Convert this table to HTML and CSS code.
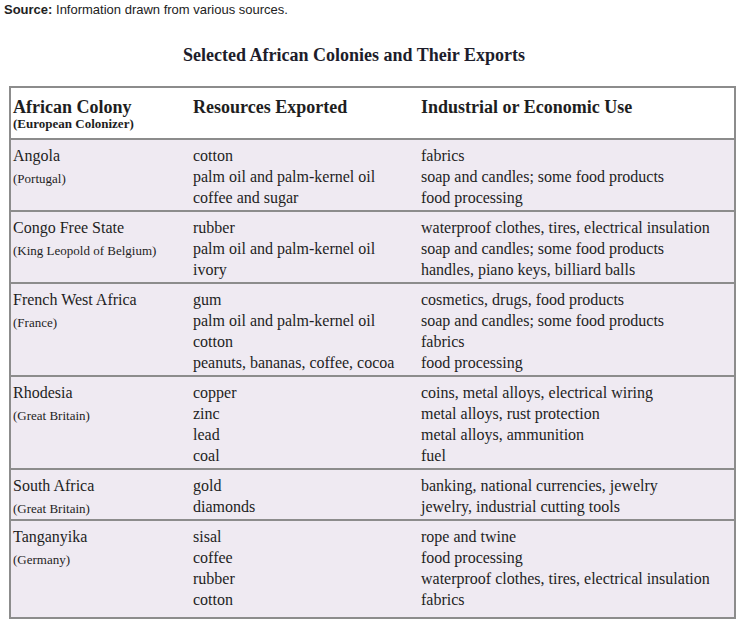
FILE: index.html
```html
<!DOCTYPE html>
<html lang="en">
<head>
<meta charset="utf-8">
<title>Selected African Colonies and Their Exports</title>
<link rel="stylesheet" href="styles.css">
</head>
<body>
<p class="source"><b>Source:</b> Information drawn from various sources.</p>
<h2 class="title">Selected African Colonies and Their Exports</h2>
<table class="exports">
  <colgroup>
    <col class="c1"><col class="c2"><col class="c3">
  </colgroup>
  <thead>
    <tr>
      <th><span class="th-main">African Colony</span><span class="th-sub">(European Colonizer)</span></th>
      <th><span class="th-main">Resources Exported</span></th>
      <th><span class="th-main">Industrial or Economic Use</span></th>
    </tr>
  </thead>
  <tbody>
    <tr>
      <td><span class="colony">Angola</span><span class="colonizer">(Portugal)</span></td>
      <td>cotton<br>palm oil and palm-kernel oil<br>coffee and sugar</td>
      <td>fabrics<br>soap and candles; some food products<br>food processing</td>
    </tr>
    <tr>
      <td><span class="colony">Congo Free State</span><span class="colonizer">(King Leopold of Belgium)</span></td>
      <td>rubber<br>palm oil and palm-kernel oil<br>ivory</td>
      <td>waterproof clothes, tires, electrical insulation<br>soap and candles; some food products<br>handles, piano keys, billiard balls</td>
    </tr>
    <tr>
      <td><span class="colony">French West Africa</span><span class="colonizer">(France)</span></td>
      <td>gum<br>palm oil and palm-kernel oil<br>cotton<br>peanuts, bananas, coffee, cocoa</td>
      <td>cosmetics, drugs, food products<br>soap and candles; some food products<br>fabrics<br>food processing</td>
    </tr>
    <tr>
      <td><span class="colony">Rhodesia</span><span class="colonizer">(Great Britain)</span></td>
      <td>copper<br>zinc<br>lead<br>coal</td>
      <td>coins, metal alloys, electrical wiring<br>metal alloys, rust protection<br>metal alloys, ammunition<br>fuel</td>
    </tr>
    <tr>
      <td><span class="colony">South Africa</span><span class="colonizer">(Great Britain)</span></td>
      <td>gold<br>diamonds</td>
      <td>banking, national currencies, jewelry<br>jewelry, industrial cutting tools</td>
    </tr>
    <tr class="last">
      <td><span class="colony">Tanganyika</span><span class="colonizer">(Germany)</span></td>
      <td>sisal<br>coffee<br>rubber<br>cotton</td>
      <td>rope and twine<br>food processing<br>waterproof clothes, tires, electrical insulation<br>fabrics</td>
    </tr>
  </tbody>
</table>
</body>
</html>
```

FILE: styles.css
```css
html, body {
  margin: 0;
  padding: 0;
  background: #ffffff;
}

body {
  padding: 0 2px 0 9px;
  color: #1e1e1e;
  font-family: "Liberation Serif", "Times New Roman", Times, serif;
}

.source {
  margin: 0 0 0 -5px;
  padding-top: 2px;
  font-family: "Liberation Sans", Arial, sans-serif;
  font-size: 13px;
  line-height: 16px;
  color: #222222;
}

.title {
  margin: 26px 0 0 0;
  padding-right: 37px;
  text-align: center;
  font-size: 18px;
  line-height: 22px;
  font-weight: bold;
  color: #1d1d2b;
}

.exports {
  margin-top: 20px;
  width: 727px;
  border-collapse: collapse;
  border: 2px solid #8c8c8c;
  table-layout: fixed;
}

.c1 { width: 180px; }
.c2 { width: 228px; }
.c3 { width: auto; }

.exports th {
  text-align: left;
  vertical-align: top;
  padding: 9px 3px 7px 3px;
  background: #ffffff;
  font-weight: bold;
}

.exports th:first-child,
.exports td:first-child {
  padding-left: 2px;
}

.th-main {
  display: block;
  font-size: 18px;
  line-height: 20px;
}

.th-sub {
  display: block;
  font-size: 13px;
  line-height: 14px;
}

.exports tbody tr {
  border-top: 2px solid #8c8c8c;
  background: #efeaf2;
}

.exports td {
  vertical-align: top;
  padding: 5px 3px 2px 3px;
  font-size: 16px;
  line-height: 21px;
}

.exports tr.last td {
  padding-bottom: 7px;
}

.colony {
  display: block;
}

.colonizer {
  display: block;
  font-size: 13px;
  line-height: 21px;
  padding-top: 2px;
  margin-bottom: -2px;
}
```
